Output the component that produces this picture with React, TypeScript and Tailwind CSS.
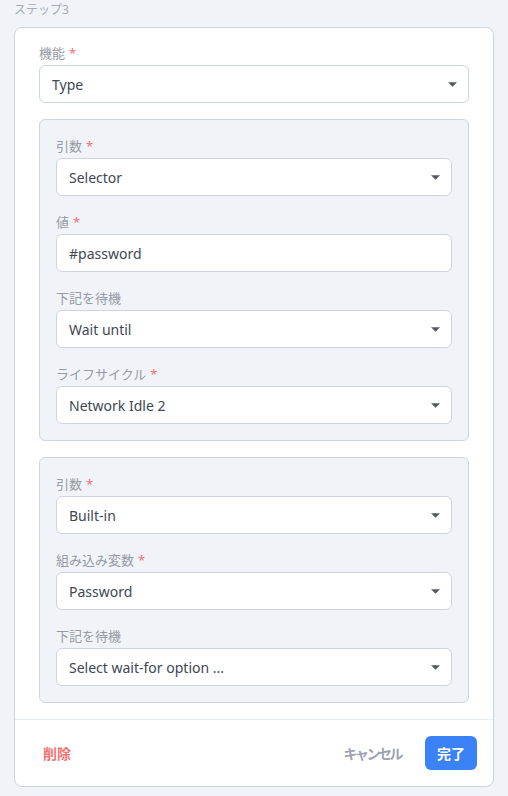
import React from "react";

const font = { fontFamily: '"Noto Sans", "Noto Sans CJK JP", sans-serif' };

function Caret() {
  return (
    <svg width="9" height="5" viewBox="0 0 9 5" className="shrink-0">
      <path d="M0 0.3 L9 0.3 L4.5 4.8 Z" fill="#555a60" />
    </svg>
  );
}

function Label({ text, required }: { text: string; required?: boolean }) {
  return (
    <div className="h-5 mb-[2px] text-[13px] leading-5 text-[#959ba4]">
      {text}
      {required && <span className="ml-1 text-[#f87171]">*</span>}
    </div>
  );
}

function Select({ value }: { value: string }) {
  return (
    <div className="h-[38px] w-full bg-white border border-[#cbd5e1] rounded-md flex items-center justify-between pl-3 pr-[11px] text-[14px] text-[#404754]">
      <span>{value}</span>
      <Caret />
    </div>
  );
}

function Input({ value }: { value: string }) {
  return (
    <div className="h-[38px] w-full bg-white border border-[#cbd5e1] rounded-md flex items-center pl-3 text-[14px] text-[#404754]">
      {value}
    </div>
  );
}

function Field({ label, required, children }: { label: string; required?: boolean; children: React.ReactNode }) {
  return (
    <div>
      <Label text={label} required={required} />
      {children}
    </div>
  );
}

export default function App() {
  return (
    <div className="min-h-[796px] bg-[#f0f4f9]" style={font}>
      <div className="h-[27px] pt-[2px] px-[14px] text-[12px] leading-4 text-[#a4abb6]">ステップ3</div>
      <div className="mx-[14px] bg-white border border-[#cbd5e1] rounded-lg">
        <div className="pt-[15px] px-6 pb-4">
          <Field label="機能" required>
            <Select value="Type" />
          </Field>
          <div className="mt-4 bg-[#f0f3f8] border border-[#cbd5e1] rounded-md p-4 flex flex-col gap-4">
            <Field label="引数" required>
              <Select value="Selector" />
            </Field>
            <Field label="値" required>
              <Input value="#password" />
            </Field>
            <Field label="下記を待機">
              <Select value="Wait until" />
            </Field>
            <Field label="ライフサイクル" required>
              <Select value="Network Idle 2" />
            </Field>
          </div>
          <div className="mt-4 bg-[#f0f3f8] border border-[#cbd5e1] rounded-md p-4 flex flex-col gap-4">
            <Field label="引数" required>
              <Select value="Built-in" />
            </Field>
            <Field label="組み込み変数" required>
              <Select value="Password" />
            </Field>
            <Field label="下記を待機">
              <Select value="Select wait-for option ..." />
            </Field>
          </div>
        </div>
        <div className="border-t border-[#e9eef4] px-4 py-4 flex items-center justify-between">
          <button className="h-[34px] px-3 text-[14px] font-bold text-[#f87171]">削除</button>
          <div className="flex items-center gap-3">
            <button className="h-[34px] px-3 text-[14px] font-bold text-[#9ca3af] tracking-[-2.5px]">キャンセル</button>
            <button className="h-[34px] px-3 rounded-md bg-[#3b82f6] text-[14px] font-bold text-white">完了</button>
          </div>
        </div>
      </div>
    </div>
  );
}
